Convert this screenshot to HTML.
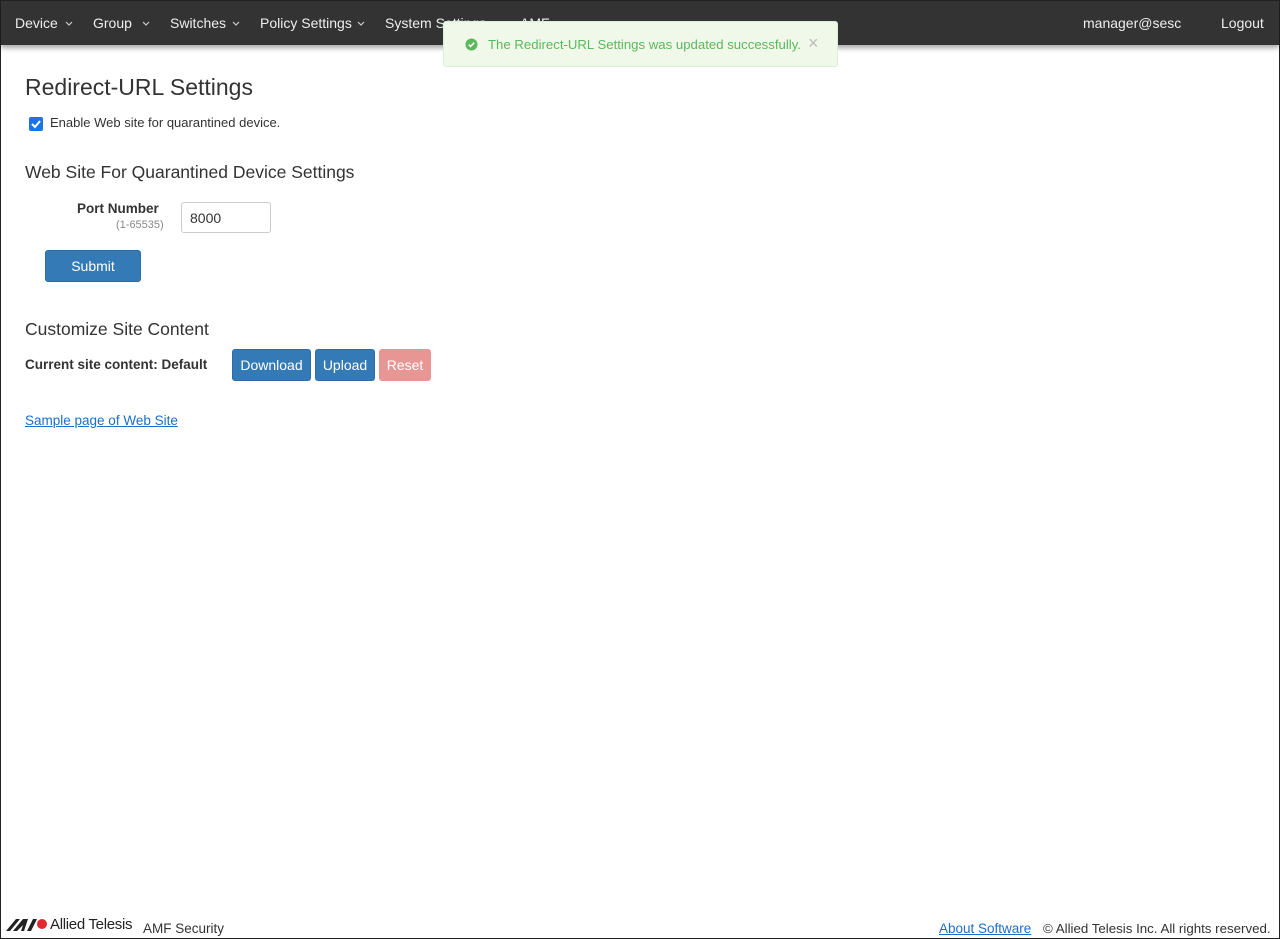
<!DOCTYPE html>
<html><head><meta charset="utf-8"><style>
*{box-sizing:border-box}
html,body{margin:0;width:1280px;height:939px;overflow:hidden;background:#fff;font-family:"Liberation Sans",sans-serif;color:#333;font-size:14px}
.frame{position:absolute;left:0;top:0;width:1280px;height:939px;border:1px solid #222}
.nav{position:absolute;left:1px;top:1px;width:1278px;height:44px;background:#333;box-shadow:0 3px 5px rgba(0,0,0,.35)}
.nav span{position:absolute;top:14px;color:#eee;font-size:14px;white-space:nowrap}
.nav svg{position:absolute;top:20px}
.alert{position:absolute;left:443px;top:21px;width:395px;height:46px;background:#eff8e9;border:1px solid #dcefd2;border-radius:3px;color:#5cb85c;font-size:13.5px}
.t{position:absolute;white-space:nowrap}
.btn{position:absolute;background:#337ab7;color:#fff;border-radius:3px;font-size:14px;text-align:center;border:1px solid #2e6da4}
</style></head><body>
<div class="frame"></div>
<div class="nav">
<span style="left:14px">Device</span><svg style="left:64px" width="8" height="6"><path d="M1 1l3 3 3-3" stroke="#ccc" stroke-width="1.2" fill="none"/></svg>
<span style="left:92px">Group</span><svg style="left:141px" width="8" height="6"><path d="M1 1l3 3 3-3" stroke="#ccc" stroke-width="1.2" fill="none"/></svg>
<span style="left:169px">Switches</span><svg style="left:231px" width="8" height="6"><path d="M1 1l3 3 3-3" stroke="#ccc" stroke-width="1.2" fill="none"/></svg>
<span style="left:259px">Policy Settings</span><svg style="left:356px" width="8" height="6"><path d="M1 1l3 3 3-3" stroke="#ccc" stroke-width="1.2" fill="none"/></svg>
<span style="left:384px">System Settings</span>
<span style="left:519px">AMF</span>
<span style="left:1082px">manager@sesc</span>
<span style="left:1220px">Logout</span>
</div>
<div class="alert">
<svg style="position:absolute;left:21px;top:16px" width="13" height="13" viewBox="0 0 13 13"><circle cx="6.5" cy="6.5" r="6" fill="#5cb85c"/><path d="M3.8 6.7l1.8 1.8 3.6-3.8" stroke="#fff" stroke-width="1.6" fill="none"/></svg>
<span class="t" style="left:44px;top:15px;font-size:13.2px">The Redirect-URL Settings was updated successfully.</span>
<span class="t" style="left:364px;top:11px;color:#bbb;font-size:18px">×</span>
</div>
<div class="t" style="left:25px;top:74px;font-size:23px;color:#333">Redirect-URL Settings</div>
<div style="position:absolute;left:29px;top:117px;width:14px;height:14px;background:#1a73e8;border-radius:2px"><svg width="14" height="14"><path d="M3 7l3 3 5-6" stroke="#fff" stroke-width="2" fill="none"/></svg></div>
<div class="t" style="left:50px;top:115px;font-size:13px">Enable Web site for quarantined device.</div>
<div class="t" style="left:25px;top:162px;font-size:17.5px">Web Site For Quarantined Device Settings</div>
<div class="t" style="left:77px;top:201px;font-weight:bold;font-size:13.5px">Port Number</div>
<div class="t" style="left:116px;top:219px;font-size:11px;color:#888">(1-65535)</div>
<div style="position:absolute;left:181px;top:202px;width:90px;height:31px;border:1px solid #ccc;border-radius:3px;padding:7px 8px;font-size:14px">8000</div>
<div class="btn" style="left:45px;top:250px;width:96px;height:32px;line-height:30px">Submit</div>
<div class="t" style="left:25px;top:319px;font-size:17.5px">Customize Site Content</div>
<div class="t" style="left:25px;top:357px;font-weight:bold;font-size:13.5px">Current site content: Default</div>
<div class="btn" style="left:232px;top:349px;width:79px;height:32px;line-height:30px">Download</div>
<div class="btn" style="left:315px;top:349px;width:60px;height:32px;line-height:30px">Upload</div>
<div class="btn" style="left:379px;top:349px;width:52px;height:32px;line-height:30px;background:#e89694;border-color:#e89694">Reset</div>
<div class="t" style="left:25px;top:413px;font-size:13.5px;color:#1a6fc9;text-decoration:underline">Sample page of Web Site</div>
<svg style="position:absolute;left:6px;top:918px" width="42" height="14" viewBox="0 0 42 14"><path d="M0 13L10 1h4L4 13zM7 13L17 1h5l-4 12h-3l2-6-6 6zM21 13l6-12h4l-6 12z" fill="#222"/><circle cx="36" cy="6" r="5" fill="#e0282e"/></svg>
<div class="t" style="left:50px;top:916px;font-size:15px;color:#222;letter-spacing:-0.3px">Allied Telesis</div>
<div class="t" style="left:143px;top:921px;font-size:13.5px;color:#333">AMF Security</div>
<div class="t" style="left:939px;top:921px;font-size:13.5px;color:#1a6fc9;text-decoration:underline">About Software</div>
<div class="t" style="left:1043px;top:921px;font-size:13.3px;color:#333">© Allied Telesis Inc. All rights reserved.</div>
</body></html>
